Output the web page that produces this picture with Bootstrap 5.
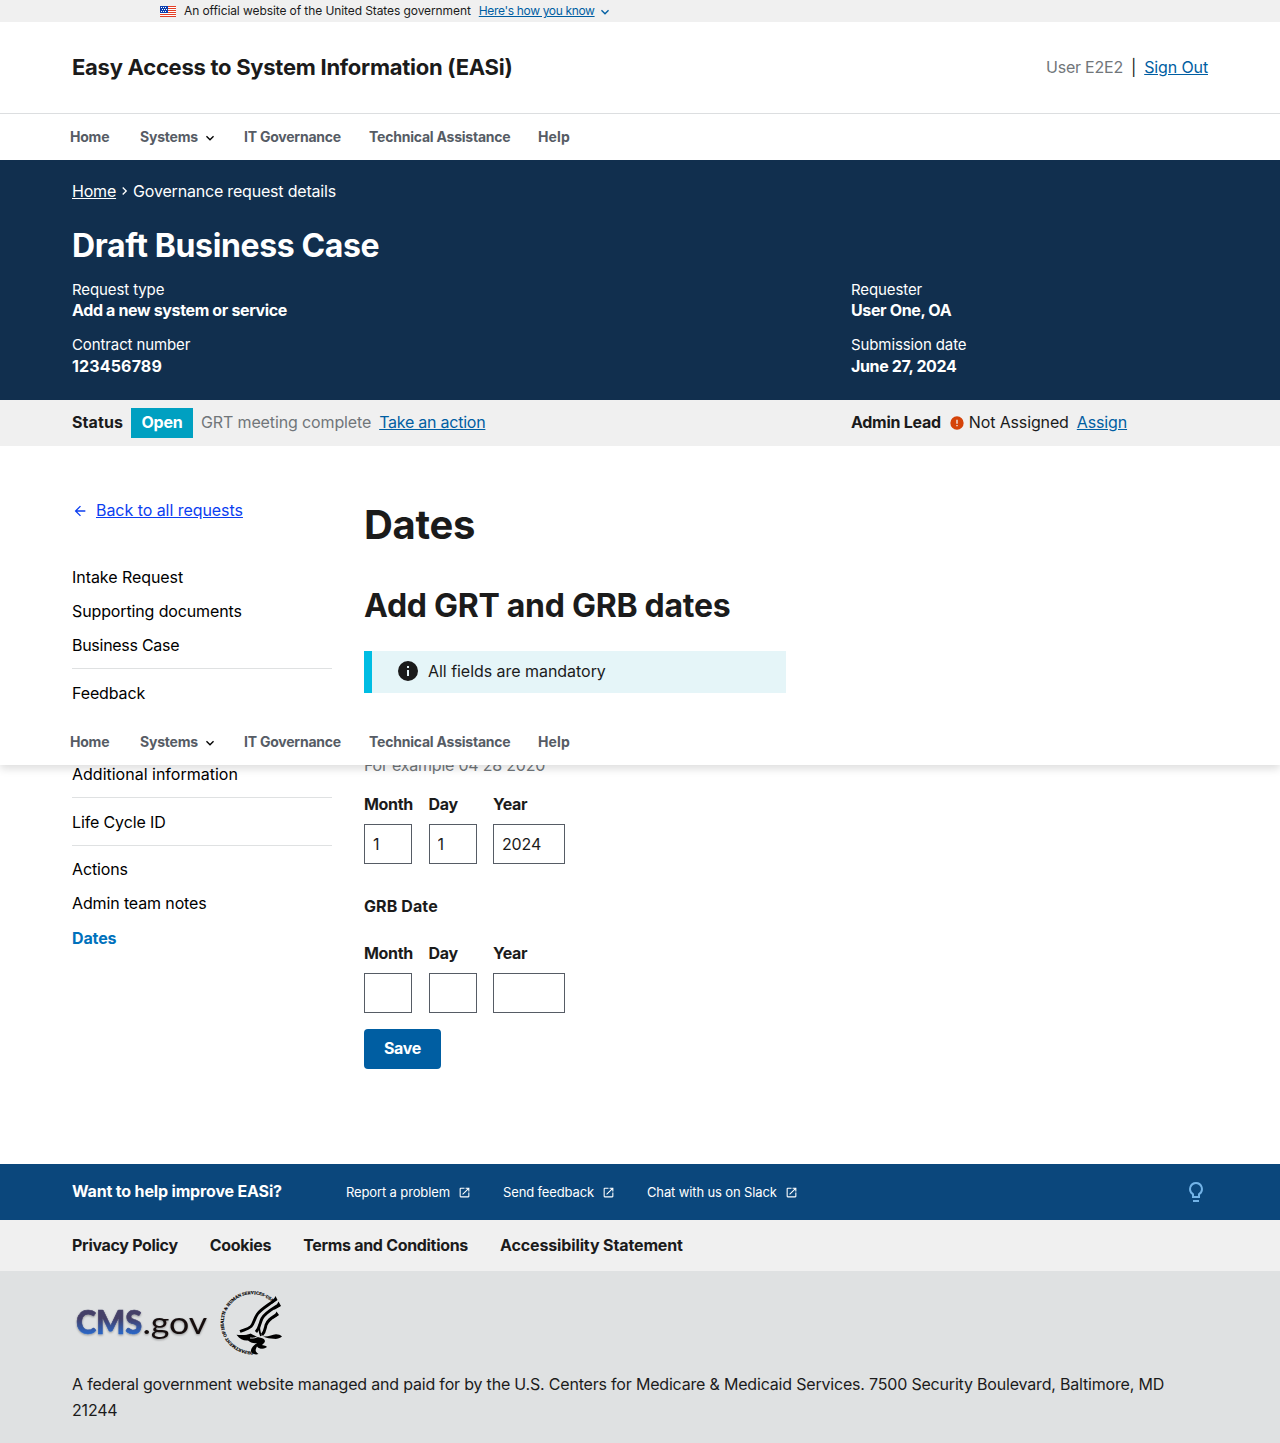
<!DOCTYPE html>
<html lang="en">
<head>
<meta charset="utf-8">
<meta name="viewport" content="width=device-width, initial-scale=1">
<title>EASi</title>
<link href="https://cdn.jsdelivr.net/npm/bootstrap@5.3.0/dist/css/bootstrap.min.css" rel="stylesheet">
<style>
body{font-family:Inter,"Liberation Sans",sans-serif;font-size:16px;line-height:26px;letter-spacing:-.13px;color:#1b1b1b;background:#fff;position:relative}
a{color:#005ea2}
b,h1,h2,.fw-bold{letter-spacing:-.27px;font-weight:700}
h1,h2,p,ul,dl,dd{margin:0}
svg{flex:none}
.easi-wrap{padding-left:72px;padding-right:72px}
.gov-bar{height:22px;background:#f0f0f0;padding-left:160px;font-size:12px;letter-spacing:-.09px;line-height:22px}
.gov-bar a{letter-spacing:-.34px;margin-left:8px}
.gov-bar .bar-chev{color:#005ea2;margin-left:2px;margin-top:2px}
.site-head{height:92px;border-bottom:1px solid #dcdee0;padding-bottom:2px}
.site-title{font-size:22px;letter-spacing:-.27px}
.text-soft{color:#71767a}
.user-name{letter-spacing:-.22px}
.main-nav{height:46px;padding-left:70px;background:#fff;font-size:14px;font-weight:700;letter-spacing:-.22px}
.main-nav a{color:#565c65;text-decoration:none;white-space:nowrap}
.main-nav a:last-child{letter-spacing:.1px}
.main-nav svg{margin-top:2px}
.nav-home{width:70px}.nav-sys{width:104px}.nav-gov{width:125px}.nav-tech{width:169px}
.floating-nav{position:absolute;left:0;right:0;top:719px;z-index:5;box-shadow:0 4px 8px rgba(0,0,0,.13);clip-path:inset(0 0 -14px 0)}
.summary{height:240px;background:#112f4e;color:#fff;padding-top:18px}
.summary a{color:#fff}
.crumbs{letter-spacing:-.19px}
.summary h1{font-size:32px;line-height:40px;letter-spacing:-.38px;margin-top:22px}
.facts{margin-top:14px}
.facts dt{font-weight:400;font-size:15px;line-height:20px;letter-spacing:-.11px}
.facts dd{font-weight:700;line-height:21px;letter-spacing:-.36px;margin-bottom:14.4px}
.facts dd:last-child{padding-top:1px;margin-bottom:0}
.left-part{width:779px}
.status-bar{height:46px;background:#f0f0f0}
.status-bar span,.status-bar a,.status-bar b:not(.open-tag){margin-top:-2px}
.open-tag{background:#00a0c1;color:#fff;height:30px;line-height:29px;width:62px;text-align:center;margin-left:8px}
.content-area{height:718px;padding-top:52px}
.side{width:260px;margin-right:32px}
.back-link{padding-top:1px}
.back-link a{color:#0b3ef0;letter-spacing:-.05px;margin-left:8px;margin-top:-2px}
.side ul{margin-top:37px}
.side li{height:34.2px;line-height:34px}
.side li a{color:#000;text-decoration:none}
.side li.divided{height:47.5px}
.side li.divided::after{content:"";display:block;margin-top:6px;border-top:1px solid #dfe1e2}
.side li.skip-row{height:81.4px}
.side li.active-row a{color:#0071bc;font-weight:700;letter-spacing:-.12px}
.form-col h1{font-size:40px;line-height:54px;letter-spacing:-.33px}
.form-col h2{font-size:32px;line-height:44px;letter-spacing:-.28px;margin-top:32px}
.info-note{width:422px;height:42px;margin-top:23px;border-left:8px solid #00bde3;background:#e5f5f8;padding:0 0 2px 24px;letter-spacing:-.04px}
.hint{margin-top:59px;color:#71767a;letter-spacing:-.22px}
.date-row{gap:16.5px}
.grt-row{margin-top:13px}
.grb-row{margin-top:21px}
.grb-label{margin-top:29px;letter-spacing:.1px}
.date-row label{display:block;font-weight:700;letter-spacing:-.31px;white-space:nowrap;width:48px}
.date-row input{margin-top:7px;width:48px;height:40px;border:1px solid #565c65;border-radius:0;padding:0 8px;color:#1b1b1b;font-size:16px;letter-spacing:-.15px;display:block}
.date-row input.year-box{width:72px}
.save-btn{background:#005ea2;color:#fff;font-weight:700;letter-spacing:-.3px;width:77px;height:40px;line-height:38px;padding:0 0 2px;border:0;border-radius:4px;margin-top:16px}
.help-bar{height:56px;background:#0b477c;color:#fff}
.help-bar b{width:274px;letter-spacing:-.16px;margin-top:-2px}
.help-bar a{color:#fff;text-decoration:none;font-size:13px;letter-spacing:-.13px;margin-top:-1px}
.help-bar a svg{margin-left:8px;margin-top:1px}
.ext-a{width:157px}.ext-b{width:144px}
.policy-bar{height:51px;background:#f0f0f0;gap:32px;padding-bottom:2px}
.policy-bar a{color:#1b1b1b;text-decoration:none;font-weight:700;letter-spacing:-.31px}
.policy-bar a:last-child{letter-spacing:-.13px}
.gov-foot{height:172px;background:#dfe1e2;padding-top:17px}
.gov-foot p{letter-spacing:-.189px;margin-top:13px}
</style>
<script src="https://cdn.jsdelivr.net/npm/bootstrap@5.3.0/dist/js/bootstrap.bundle.min.js"></script>
</head>
<body>
<svg width="0" height="0" class="position-absolute" aria-hidden="true">
  <symbol id="chev" viewBox="0 0 24 24"><path fill="currentColor" d="M16.59 8.59 12 13.17 7.41 8.59 6 10l6 6 6-6z"/></symbol>
  <symbol id="launch" viewBox="0 0 24 24"><path fill="currentColor" d="M19 19H5V5h7V3H5a2 2 0 0 0-2 2v14a2 2 0 0 0 2 2h14c1.1 0 2-.9 2-2v-7h-2v7zM14 3v2h3.59l-9.83 9.83 1.41 1.41L19 6.41V10h2V3h-7z"/></symbol>
</svg>

<div class="gov-bar d-flex align-items-center">
  <svg width="16" height="11" viewBox="0 0 16 11" class="me-2" shape-rendering="crispEdges">
    <path fill="#fff" d="M0 0h16v11H0z"/>
    <path fill="#e23f26" d="M0 0h16v1H0zM0 2h16v1H0zM0 4h16v1H0zM0 6h16v1H0zM0 8h16v1H0zM0 10h16v1H0z"/>
    <path fill="#0b3fae" d="M0 0h8v7H0z"/>
    <path fill="#fff" d="M1 1h1v1H1zM3 1h1v1H3zM5 1h1v1H5zM2 3h1v1H2zM4 3h1v1H4zM6 3h1v1H6zM1 5h1v1H1zM3 5h1v1H3zM5 5h1v1H5z"/>
  </svg>
  <span>An official website of the United States government</span>
  <a href="#">Here's how you know</a>
  <svg width="16" height="16" class="bar-chev"><use href="#chev"/></svg>
</div>

<header class="site-head easi-wrap d-flex align-items-center justify-content-between">
  <b class="site-title">Easy Access to System Information (EASi)</b>
  <div class="d-flex gap-2"><span class="text-soft user-name">User E2E2</span><span>|</span><a href="#">Sign Out</a></div>
</header>

<nav class="main-nav d-flex align-items-center">
  <a class="nav-home" href="#">Home</a>
  <a class="nav-sys d-flex align-items-center" href="#">Systems<svg width="16" height="16" class="ms-1 text-black"><use href="#chev"/></svg></a>
  <a class="nav-gov" href="#">IT Governance</a>
  <a class="nav-tech" href="#">Technical Assistance</a>
  <a href="#">Help</a>
</nav>

<section class="summary easi-wrap">
  <div class="crumbs d-flex align-items-center">
    <a href="#">Home</a>
    <svg width="17" height="16" viewBox="0 0 24 24"><path fill="#fff" d="M10 6 8.59 7.41 13.17 12l-4.58 4.59L10 18l6-6z"/></svg>
    <span>Governance request details</span>
  </div>
  <h1>Draft Business Case</h1>
  <div class="facts d-flex">
    <dl class="left-part">
      <dt>Request type</dt><dd>Add a new system or service</dd>
      <dt>Contract number</dt><dd style="letter-spacing:.15px">123456789</dd>
    </dl>
    <dl>
      <dt>Requester</dt><dd>User One, OA</dd>
      <dt>Submission date</dt><dd>June 27, 2024</dd>
    </dl>
  </div>
</section>

<section class="status-bar easi-wrap d-flex align-items-center">
  <div class="left-part d-flex align-items-center">
    <b style="letter-spacing:.08px">Status</b><b class="open-tag">Open</b>
    <span class="text-soft ms-2">GRT meeting complete</span>
    <a class="ms-2" href="#" style="letter-spacing:-.24px">Take an action</a>
  </div>
  <div class="d-flex align-items-center">
    <b>Admin Lead</b>
    <svg width="16" height="16" viewBox="0 0 24 24" class="ms-2"><path fill="#d54309" d="M12 2a10 10 0 1 0 0 20 10 10 0 0 0 0-20zm1 15h-2v-2h2zm0-4h-2V7h2z"/></svg>
    <span class="ms-1">Not Assigned</span>
    <a class="ms-2" href="#">Assign</a>
  </div>
</section>

<main class="content-area easi-wrap d-flex">
  <aside class="side">
    <div class="back-link d-flex align-items-center">
      <svg width="16" height="16" viewBox="0 0 24 24"><path fill="#0b3ef0" d="M20 11H7.83l5.59-5.59L12 4l-8 8 8 8 1.41-1.41L7.83 13H20v-2z"/></svg>
      <a href="#">Back to all requests</a>
    </div>
    <ul class="list-unstyled">
      <li><a href="#" style="letter-spacing:-.06px">Intake Request</a></li>
      <li><a href="#">Supporting documents</a></li>
      <li class="divided"><a href="#" style="letter-spacing:-.28px">Business Case</a></li>
      <li class="skip-row"><a href="#">Feedback</a></li>
      <li class="divided"><a href="#" style="letter-spacing:0">Additional information</a></li>
      <li class="divided"><a href="#">Life Cycle ID</a></li>
      <li><a href="#">Actions</a></li>
      <li><a href="#">Admin team notes</a></li>
      <li class="active-row"><a href="#">Dates</a></li>
    </ul>
  </aside>
  <div class="form-col">
    <h1>Dates</h1>
    <h2>Add GRT and GRB dates</h2>
    <div class="info-note d-flex align-items-center">
      <svg width="24" height="24" viewBox="0 0 24 24" class="me-2"><path fill="#1b1b1b" d="M12 2a10 10 0 1 0 0 20 10 10 0 0 0 0-20zm1 15h-2v-6h2zm0-8h-2V7h2z"/></svg>
      All fields are mandatory
    </div>
    <div class="hint">For example 04 28 2020</div>
    <div class="date-row grt-row d-flex">
      <div><label>Month</label><input value="1"></div>
      <div><label>Day</label><input value="1"></div>
      <div><label>Year</label><input class="year-box" value="2024"></div>
    </div>
    <div class="fw-bold grb-label">GRB Date</div>
    <div class="date-row grb-row d-flex">
      <div><label>Month</label><input></div>
      <div><label>Day</label><input></div>
      <div><label>Year</label><input class="year-box"></div>
    </div>
    <button class="btn save-btn">Save</button>
  </div>
</main>

<section class="help-bar easi-wrap d-flex align-items-center">
  <b>Want to help improve EASi?</b>
  <a class="ext-a d-flex align-items-center" href="#">Report a problem<svg width="13" height="13"><use href="#launch"/></svg></a>
  <a class="ext-b d-flex align-items-center" href="#">Send feedback<svg width="13" height="13"><use href="#launch"/></svg></a>
  <a class="d-flex align-items-center" href="#">Chat with us on Slack<svg width="13" height="13"><use href="#launch"/></svg></a>
  <svg width="24" height="24" viewBox="0 0 24 24" class="ms-auto"><path fill="#73b3e7" d="M9 20h6v1.900H9zM12 2a7 7 0 0 0-4 12.700V18h8v-3.300A7 7 0 0 0 12 2zm2.900 11.100-.9.600V16h-4v-2.300l-.9-.6a5 5 0 1 1 5.800 0z"/></svg>
</section>
<nav class="policy-bar easi-wrap d-flex align-items-center">
  <a href="#">Privacy Policy</a><a href="#">Cookies</a><a href="#">Terms and Conditions</a><a href="#">Accessibility Statement</a>
</nav>
<footer class="gov-foot easi-wrap">
  <svg width="212" height="70" viewBox="0 0 212 70" class="d-block">
    <defs>
      <linearGradient id="cmsfill" gradientUnits="userSpaceOnUse" x1="0" y1="22" x2="0" y2="47"><stop offset=".35" stop-color="#454068"/><stop offset=".9" stop-color="#2c64c0"/></linearGradient>
      <filter id="soft" x="-10%" y="-20%" width="120%" height="150%"><feDropShadow dx="0" dy="1" stdDeviation="1" flood-color="#000" flood-opacity=".35"/></filter>
      <path id="ring" d="M181 63.500A28.700 28.700 0 1 1 206 22"/>
    </defs>
    <g filter="url(#soft)" font-family="Lato, sans-serif">
      <text x="4" y="45.500" font-size="31.500" font-weight="900" stroke="url(#cmsfill)" stroke-width=".6" textLength="66" lengthAdjust="spacingAndGlyphs" fill="url(#cmsfill)">CMS</text>
      <text x="70.500" y="45.500" font-size="31" textLength="64.500" lengthAdjust="spacingAndGlyphs" fill="#151010">.gov</text>
    </g>
    <text font-family="Liberation Serif, serif" font-weight="700" font-size="4.350" fill="#000" stroke="#000" stroke-width=".2" letter-spacing="0"><textPath href="#ring">DEPARTMENT OF HEALTH &amp; HUMAN SERVICES·USA</textPath></text>
    <g fill="none" stroke="#000" stroke-linejoin="round">
      <path stroke-width="2.900" d="M204 11c-7 6-14 9-18.500 15-3.500 5-3.500 9.500-6.500 12.500-3 2.500-6 3-11 5"/>
      <path stroke-width="2.900" d="M207.500 16.500c-8 5-14 8-17.500 14-2.500 5-2 9-6 13.500"/>
      <path stroke-width="2.900" d="M205.500 26c-6 4-10 6-11.500 11-1 4-1 7-4 10"/>
      <path stroke-width="1.800" d="M188 35c-1 3-1 8 1 13"/>
    </g>
    <g fill="#000">
      <path d="M164.500 46.700c5 .8 10 .5 14-1.200 4 2 7 4 11 4.500 4 1 4.500 4 1.500 6-2 1.500-2 3 2.500 3.500-3 2-7.500 1-8.500-1-1.500 3-2.500 5 1.500 7.500-4 1.500-8-1-7.500-4 .5-3 4-5.500 6-7-3.500.5-7-.5-9-2.500-4 .5-8-1-11.500-5.800z"/>
      <path d="M191 48.500c6 .5 9-2 13-2.300 2.500 0 4.500.8 6 2.300-2 1.500-5 2.800-8.500 2.300-3-.5-7-.5-10.500-2.300z"/>
      <path d="M203.500 8l2 4-6 4zM206.500 13.500l2.500 4.500-7 4zM204.500 23.500l2.500 3.500-6 4z"/>
      <path d="M187 56.500c4 .5 7 1 8 2.500-3 2-6 2-9 0z"/>
    </g>
    <path fill="none" stroke="#dfe1e2" stroke-width=".9" d="M166 46c5 .5 9 0 13-1.500M178 50c4 .5 6-.5 9-2"/>
  </svg>
  <p>A federal government website managed and paid for by the U.S. Centers for Medicare &amp; Medicaid Services. 7500 Security Boulevard, Baltimore, MD 21244</p>
</footer>

<nav class="main-nav floating-nav d-flex align-items-center">
  <a class="nav-home" href="#">Home</a>
  <a class="nav-sys d-flex align-items-center" href="#">Systems<svg width="16" height="16" class="ms-1 text-black"><use href="#chev"/></svg></a>
  <a class="nav-gov" href="#">IT Governance</a>
  <a class="nav-tech" href="#">Technical Assistance</a>
  <a href="#">Help</a>
</nav>
</body>
</html>
